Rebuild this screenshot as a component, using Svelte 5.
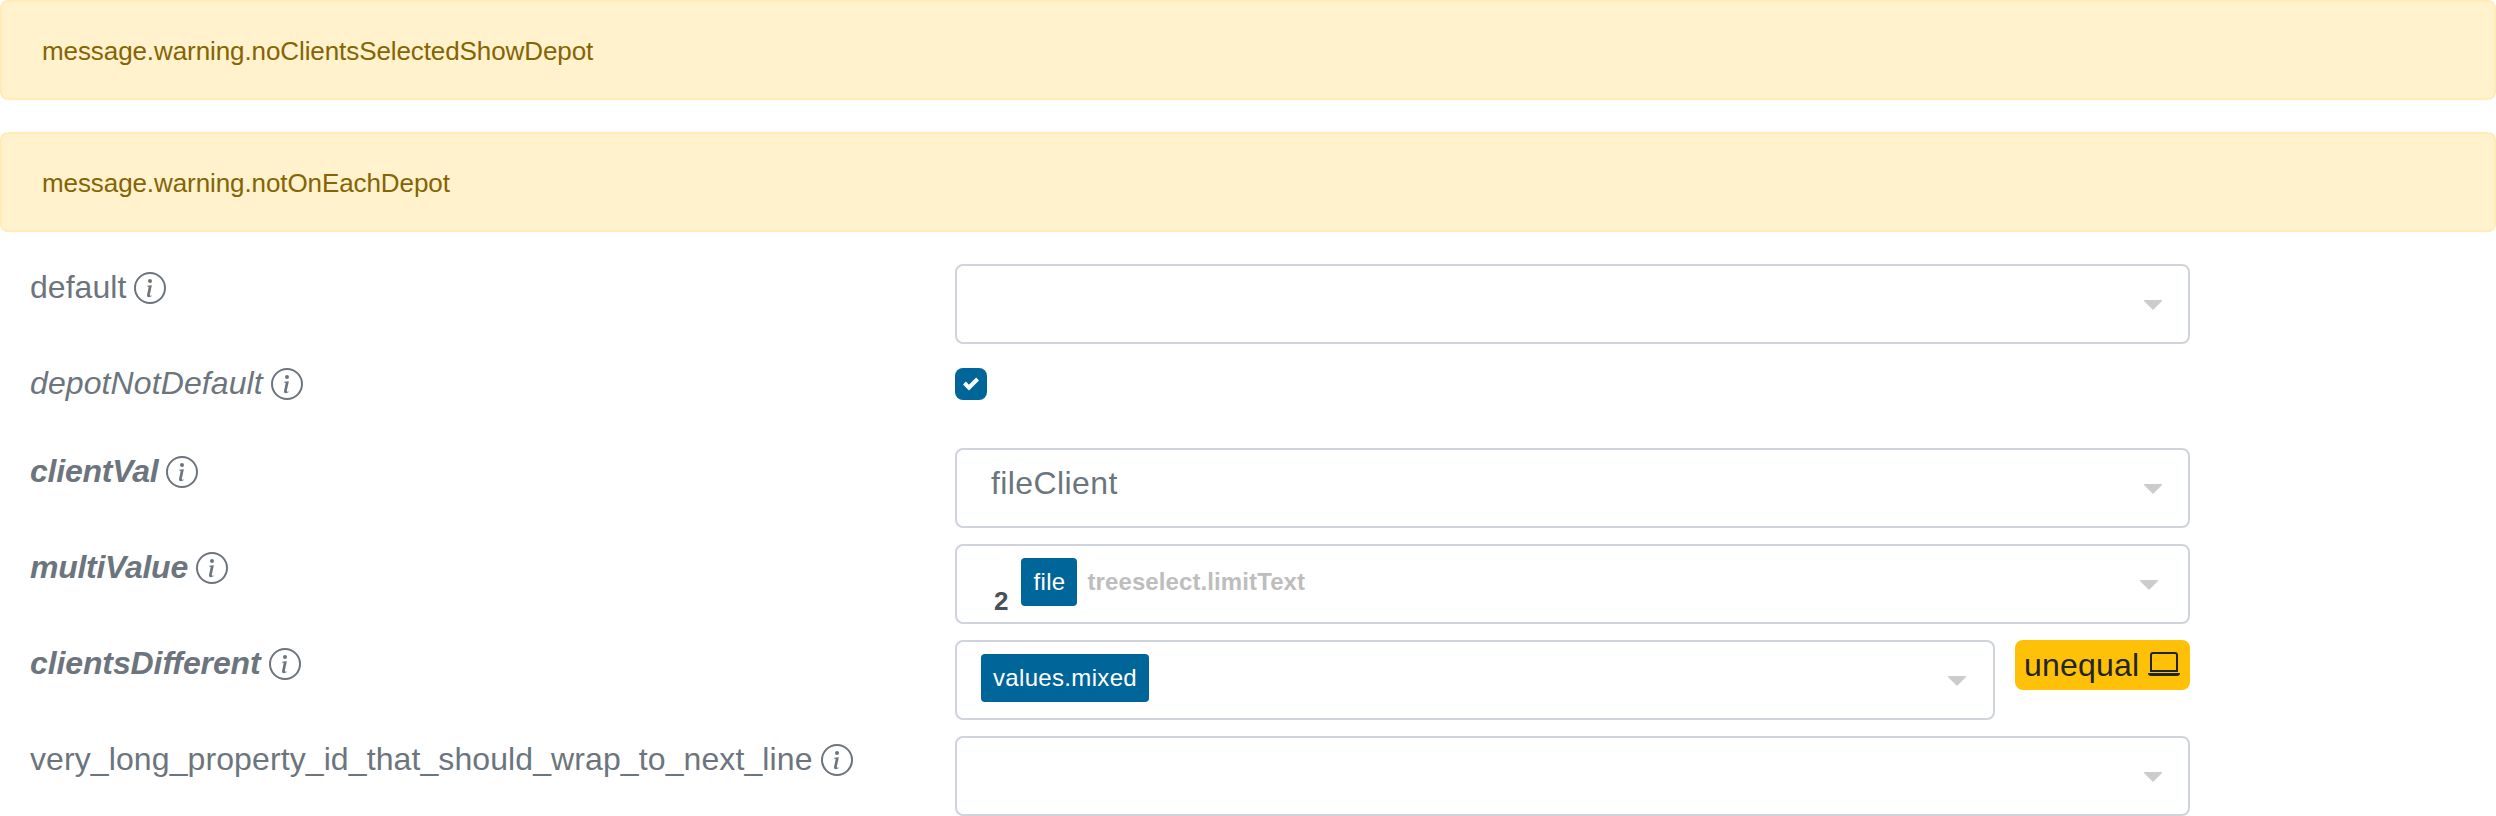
<script>
  const alerts = [
    'message.warning.noClientsSelectedShowDepot',
    'message.warning.notOnEachDepot',
  ];

  // tracking: letter spacing of the label, in px
  const properties = [
    { id: 'default', kind: 'select', tracking: 0.04 },
    { id: 'depotNotDefault', kind: 'checkbox', label: 'italic', tracking: 0.1 },
    { id: 'clientVal', kind: 'select', label: 'changed', tracking: -0.22, text: 'fileClient' },
    { id: 'multiValue', kind: 'multi', label: 'changed', tracking: -0.27, count: 2, tags: ['file'], limit: 'treeselect.limitText' },
    { id: 'clientsDifferent', kind: 'multi', label: 'changed', tracking: -0.11, tags: ['values.mixed'], badge: 'unequal' },
    { id: 'very_long_property_id_that_should_wrap_to_next_line', kind: 'select', tracking: 0.1 },
  ];
</script>

<main>
  {#each alerts as message}
    <div class="alert" role="alert">{message}</div>
  {/each}

  <div class="properties">
    {#each properties as p}
      <div class="row" class:short={p.kind === 'checkbox'}>
        <div class="label {p.label ?? ''}">
          <span style="letter-spacing: {p.tracking}px">{p.id}</span>
          <svg class="info" viewBox="0 0 16 16" fill="currentColor">
            <path fill-rule="evenodd" d="M8 15A7 7 0 1 0 8 1a7 7 0 0 0 0 14zm0 1A8 8 0 1 0 8 0a8 8 0 0 0 0 16z" />
            <path d="m8.93 6.588-2.29.287-.082.38.45.083c.294.07.352.176.288.469l-.738 3.468c-.194.897.105 1.319.808 1.319.545 0 1.178-.252 1.465-.598l.088-.416c-.2.176-.492.246-.686.246-.275 0-.375-.193-.304-.533L8.93 6.588z" />
            <circle cx="8" cy="4.5" r="1" />
          </svg>
        </div>

        <div class="value">
          {#if p.kind === 'checkbox'}
            <span class="check" role="checkbox" aria-checked="true" aria-label={p.id} tabindex="0">
              <svg viewBox="0 0 8 8" fill="#fff"><path d="M6.564.75l-3.59 3.612-1.538-1.55L0 4.26 2.974 7.25 8 2.193z" /></svg>
            </span>
          {:else}
            <div class="select" class:narrow={p.badge}>
              {#if p.text}<span class="text">{p.text}</span>{/if}
              {#if p.count}<span class="count">{p.count}</span>{/if}
              {#each p.tags ?? [] as tag}<span class="tag">{tag}</span>{/each}
              {#if p.limit}<span class="limit">{p.limit}</span>{/if}
              <svg class="caret" class:shifted={p.limit} viewBox="0 0 18 10"><path d="M0 0h18v1L9 10 0 1z" fill="#ccc" /></svg>
            </div>
            {#if p.badge}
              <span class="badge">
                <span>{p.badge}</span>
                <svg viewBox="0 0 16 16" fill="currentColor">
                  <path d="M13.5 3a.5.5 0 0 1 .5.5V11H2V3.5a.5.5 0 0 1 .5-.5h11zm-11-1A1.5 1.5 0 0 0 1 3.5V12h14V3.5A1.5 1.5 0 0 0 13.5 2h-11zM0 12.5h16a1.5 1.5 0 0 1-1.5 1.5h-13A1.5 1.5 0 0 1 0 12.5z" />
                </svg>
              </span>
            {/if}
          {/if}
        </div>
      </div>
    {/each}
  </div>
</main>

<style>
  :global(body) {
    margin: 0;
    background: #fff;
  }
  main {
    font: 32px/48px "Liberation Sans", Arial, sans-serif;
    color: #6c757d;
    height: 816px;
    overflow: hidden;
  }
  svg {
    display: block;
    flex: none;
  }
  .alert {
    box-sizing: border-box;
    height: 100px;
    margin-bottom: 32px;
    padding: 1px 40px 0;
    border: 2px solid #ffecb8;
    border-radius: 8px;
    background: #fff2cd;
    color: #856404;
    font-size: 26px;
    letter-spacing: -0.09px;
    line-height: 96px;
  }
  .properties {
    display: flex;
    flex-direction: column;
    gap: 16px;
  }
  .row {
    display: grid;
    grid-template-columns: 925px 1235px;
    height: 80px;
    padding-left: 30px;
  }
  .row.short {
    height: 72px;
  }
  .label {
    display: flex;
    align-items: center;
    gap: 8px;
    height: 48px;
  }
  .label span {
    margin-top: -2px;
  }
  .info {
    width: 32px;
    height: 32px;
  }
  .italic {
    font-style: italic;
  }
  .changed {
    font-style: italic;
    font-weight: bold;
  }
  .value {
    display: flex;
    align-items: flex-start;
    gap: 20px;
  }
  .check {
    display: flex;
    align-items: center;
    justify-content: center;
    width: 32px;
    height: 32px;
    margin-top: 8px;
    border-radius: 8px;
    background: #006599;
  }
  .check svg {
    width: 16px;
    height: 16px;
  }
  .select {
    box-sizing: border-box;
    display: flex;
    flex: 1;
    align-items: flex-start;
    height: 80px;
    padding: 12px 26px 0 24px;
    border: 2px solid #ced4da;
    border-radius: 8px;
  }
  .select.narrow {
    padding-right: 27px;
  }
  .text {
    margin: -3px 0 0 10px;
    letter-spacing: 0.4px;
  }
  .count {
    margin: 19px 13px 0 13px;
    color: #495057;
    font-size: 26px;
    font-weight: bold;
  }
  .tag {
    height: 48px;
    padding: 0 12px;
    border-radius: 4px;
    background: #006599;
    color: #fff;
    font-size: 24px;
    letter-spacing: 0.33px;
  }
  .limit {
    margin-left: 10px;
    color: #bdbdbd;
    font-size: 24px;
    font-weight: bold;
    letter-spacing: 0.1px;
  }
  .caret {
    width: 18px;
    height: 10px;
    margin: 22px 0 0 auto;
  }
  .caret.shifted {
    margin-right: 4px;
  }
  .badge {
    box-sizing: border-box;
    display: flex;
    align-items: center;
    justify-content: space-between;
    width: 175px;
    height: 50px;
    padding: 0 10px 0 9px;
    border-radius: 8px;
    background: #ffc107;
    color: #212529;
    letter-spacing: 0.2px;
  }
  .badge svg {
    width: 32px;
    height: 32px;
    margin-top: -2px;
  }
</style>
